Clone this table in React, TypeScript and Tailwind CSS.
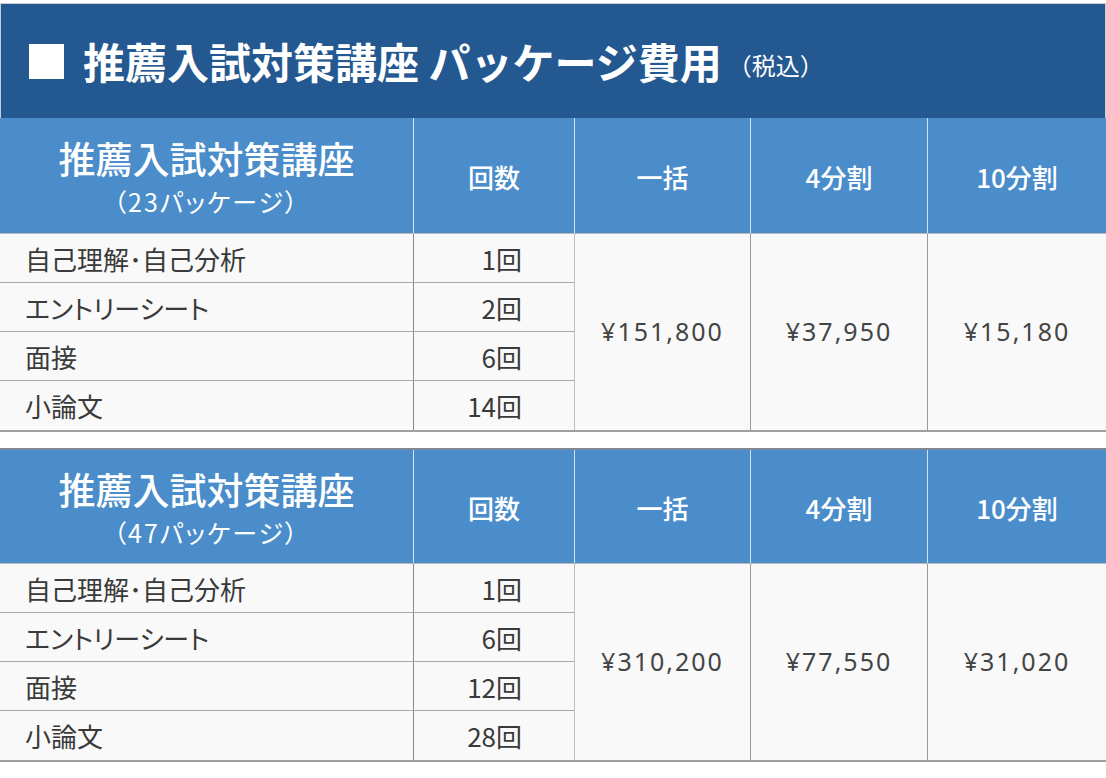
const font = { fontFamily: '"Noto Sans CJK JP", "Noto Sans", sans-serif' };
const priceFont = { fontFamily: '"Noto Sans", "Noto Sans CJK JP", sans-serif' };

interface PackageTable {
  count: string;
  rows: { name: string; times: string }[];
  prices: string[];
  top: string;
}

const tables: PackageTable[] = [
  {
    count: '23',
    rows: [
      { name: '自己理解･自己分析', times: '1回' },
      { name: 'エントリーシート', times: '2回' },
      { name: '面接', times: '6回' },
      { name: '小論文', times: '14回' },
    ],
    prices: ['¥151,800', '¥37,950', '¥15,180'],
    top: '',
  },
  {
    count: '47',
    rows: [
      { name: '自己理解･自己分析', times: '1回' },
      { name: 'エントリーシート', times: '6回' },
      { name: '面接', times: '12回' },
      { name: '小論文', times: '28回' },
    ],
    prices: ['¥310,200', '¥77,550', '¥31,020'],
    top: 'mt-[16px] border-t-2 border-[#7d8a96]',
  },
];

const PriceTable = ({ table }: { table: PackageTable }) => {
  return (
    <div className={`flex flex-col ${table.top}`}>
      <div className={`flex bg-[#4a8dca] text-white border-b border-[#b8b8b8] ${table.top ? 'h-[114px]' : 'h-[116px]'}`}>
        <div className="w-[413px] flex flex-col items-center justify-center">
          <p className="text-[37px] leading-[44px] font-medium">推薦入試対策講座</p>
          <p className="text-[25px] leading-[30px] mt-[6px] tracking-[2px] [font-feature-settings:'palt']">（{table.count}パッケージ）</p>
        </div>
        <div className="w-[161px] border-l border-[#d4e3f2] flex items-center justify-center pt-[1px] text-[26px] font-medium">回数</div>
        <div className="w-[176px] border-l border-[#d4e3f2] flex items-center justify-center pt-[1px] text-[26px] font-medium">一括</div>
        <div className="w-[177px] border-l border-[#d4e3f2] flex items-center justify-center pt-[1px] text-[26px] font-medium">4分割</div>
        <div className="flex-1 border-l border-[#d4e3f2] flex items-center justify-center pt-[1px] text-[26px] font-medium">10分割</div>
      </div>

      <div className="flex bg-[#f9f9f9] text-[#3a3a3a] border-b-2 border-[#a0a0a0]">
        <div className="w-[574px] flex flex-col">
          {table.rows.map((row, i) => (
            <div key={i} className={`flex h-[49px] ${i < 3 ? 'border-b border-[#a8a8a8]' : ''}`}>
              <div className="w-[413px] flex items-center pl-[25px] text-[26px] [font-feature-settings:'palt']">{row.name}</div>
              <div className="flex-1 border-l border-[#8a8a8a] flex items-center justify-end pr-[52px] text-[26px]">{row.times}</div>
            </div>
          ))}
        </div>
        <div className="w-[176px] border-l border-[#c0c0c0] flex items-center justify-center text-[25px] tracking-[2px] text-[#444]" style={priceFont}>{table.prices[0]}</div>
        <div className="w-[177px] border-l border-[#999999] flex items-center justify-center text-[25px] tracking-[2px] text-[#444]" style={priceFont}>{table.prices[1]}</div>
        <div className="flex-1 border-l border-[#999999] flex items-center justify-center text-[25px] tracking-[2px] text-[#444]" style={priceFont}>{table.prices[2]}</div>
      </div>
    </div>
  );
};

export default function App() {
  return (
    <div className="w-[1106px] h-[778px] bg-white pt-[3px]" style={font}>
      <div className="h-[115px] bg-[#235891] border-t border-x border-[#c8cdd3] flex items-center pl-[28px] text-white">
        <div className="w-[35px] h-[35px] bg-white mr-[19px]"></div>
        <span className="text-[42px] font-bold leading-none">推薦入試対策講座 パッケージ費用</span>
        <span className="text-[24px] ml-[6px] mt-[8px]">（税込）</span>
      </div>
      {tables.map((t, i) => (
        <PriceTable key={i} table={t} />
      ))}
    </div>
  );
}
